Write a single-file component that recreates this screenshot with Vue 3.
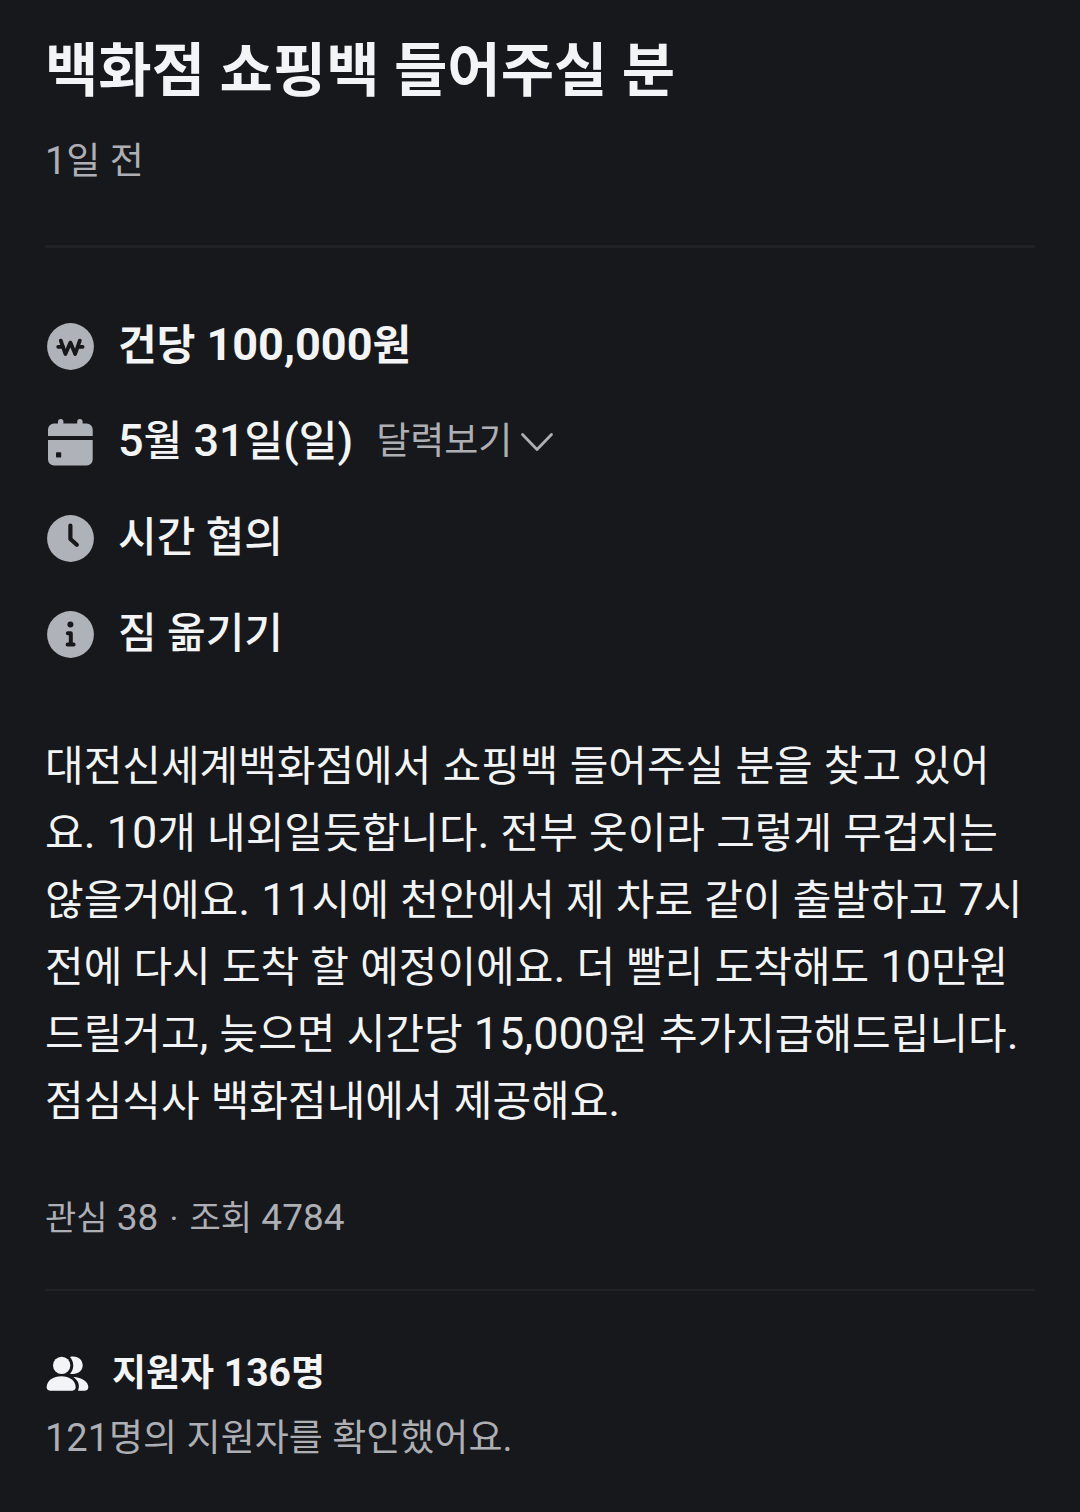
<script setup>
import { h, ref } from 'vue'

const title = '백화점 쇼핑백 들어주실 분'
const postedAt = '1일 전'
const description =
  '대전신세계백화점에서 쇼핑백 들어주실 분을 찾고 있어요. 10개 내외일듯합니다. 전부 옷이라 그렇게 무겁지는 않을거에요. 11시에 천안에서 제 차로 같이 출발하고 7시 전에 다시 도착 할 예정이에요. 더 빨리 도착해도 10만원 드릴거고, 늦으면 시간당 15,000원 추가지급해드립니다. 점심식사 백화점내에서 제공해요.'
const applicants = '지원자 136명'
const checked = '121명의 지원자를 확인했어요.'

const calendarOpen = ref(false)

// Latin runs are set slightly larger than the Hangul around them.
const MixedText = (props) =>
  props.text
    .split(/([ -~]+)/)
    .filter(Boolean)
    .map((run) => (/^[ -~]/.test(run) ? h('span', { class: 'latin' }, run) : run))
MixedText.props = ['text']
</script>

<template>
  <main class="post">
    <header class="head">
      <h1 class="title">{{ title }}</h1>
      <p class="muted"><MixedText :text="postedAt" /></p>
    </header>

    <hr class="rule" />

    <ul class="facts">
      <li class="fact strong">
        <svg class="icon" viewBox="0 0 51 51" aria-hidden="true">
          <circle cx="25.5" cy="25.5" r="23.4" fill="#afb2b9" />
          <g fill="none" stroke="#17181b" stroke-linecap="round" stroke-linejoin="round">
            <path d="M15.8 19.6 20.4 33 25.4 21.6 30.2 33 34.8 19.6" stroke-width="3.8" />
            <path d="M13.2 25.8H18M32.8 25.8H37.6" stroke-width="3.8" />
          </g>
        </svg>
        <span><MixedText text="건당 100,000원" /></span>
      </li>
      <li class="fact">
        <svg class="icon" viewBox="0 0 51 51" aria-hidden="true">
          <g fill="#afb2b9">
            <rect x="13" y="2" width="5.4" height="9" rx="2.7" />
            <rect x="32.2" y="2" width="5.4" height="9" rx="2.7" />
            <path d="M3 19V12.5a6 6 0 0 1 6-6H41.7a6 6 0 0 1 6 6V19Z" />
            <path d="M3 23H47.7V42.5a6 6 0 0 1-6 6H9a6 6 0 0 1-6-6Z" />
          </g>
          <rect x="11" y="35.3" width="5.2" height="5.2" rx="0.8" fill="#17181b" />
        </svg>
        <span><MixedText text="5월 31일(일)" /></span>
        <button class="toggle" type="button" :aria-expanded="calendarOpen" @click="calendarOpen = !calendarOpen">
          달력보기
          <svg class="chevron" viewBox="0 0 34 22" aria-hidden="true">
            <path d="M2.5 3.5 17 18.5 31.5 3.5" fill="none" stroke="#adafb4" stroke-width="2.8" stroke-linecap="round" stroke-linejoin="round" />
          </svg>
        </button>
      </li>
      <li class="fact">
        <svg class="icon" viewBox="0 0 51 51" aria-hidden="true">
          <circle cx="25.5" cy="25.5" r="23.4" fill="#afb2b9" />
          <path d="M25.4 12.5V26L31.8 31.8" fill="none" stroke="#17181b" stroke-width="4.2" stroke-linecap="round" stroke-linejoin="round" />
        </svg>
        <span>시간 협의</span>
      </li>
      <li class="fact">
        <svg class="icon" viewBox="0 0 51 51" aria-hidden="true">
          <circle cx="25.5" cy="25.5" r="23.4" fill="#afb2b9" />
          <circle cx="25.4" cy="15.5" r="3" fill="#17181b" />
          <path d="M22.8 24.3H25.8V35.5M22.6 35.5H28.6" fill="none" stroke="#17181b" stroke-width="4" stroke-linecap="round" stroke-linejoin="round" />
        </svg>
        <span>짐 옮기기</span>
      </li>
    </ul>

    <p class="description"><MixedText :text="description" /></p>
    <p class="stats"><MixedText text="관심 38 " /><span class="dot">·</span><MixedText text=" 조회 4784" /></p>

    <hr class="rule thin" />

    <section class="applicants">
      <h2 class="count">
        <svg class="people" viewBox="45 78 132 108" aria-hidden="true">
          <g fill="#f3f4f6">
            <circle cx="95" cy="106" r="26" />
            <path d="M50 172C50 152 70 139 94 139S137 152 137 172C137 178 133 182 127 182H60C54 182 50 178 50 172Z" />
            <path d="M120 81C142 76 158 88 158 106S142 135 120 131C133 118 133 95 120 81Z" />
            <path d="M130 141C156 142 175 155 175 172C175 178 171 182 165 182H144C150 166 146 152 130 141Z" />
          </g>
        </svg>
        <span><MixedText :text="applicants" /></span>
      </h2>
      <p class="muted"><MixedText :text="checked" /></p>
    </section>
  </main>
</template>

<style>
body {
  margin: 0;
  background: #17181b;
}
</style>

<style scoped>
.post {
  padding: 29px 45px 44px;
  color: #f3f4f6;
  font-family: Roboto, "Noto Sans CJK KR", sans-serif;
}

h1,
h2,
p,
ul {
  margin: 0;
  padding: 0;
}

.post :deep(.latin) {
  line-height: 1;
}

.title {
  font-size: 58px;
  font-weight: 700;
  line-height: 84px;
}

.muted {
  color: #adafb4;
  font-size: 37px;
  line-height: 56px;
}

.muted :deep(.latin) {
  font-size: 38px;
}

.head .muted {
  margin-top: 21px;
}

.rule {
  height: 3px;
  margin: 55px 0 66px;
  border: 0;
  background: #212226;
}

.facts {
  display: flex;
  flex-direction: column;
  gap: 32px;
  list-style: none;
}

.fact {
  display: flex;
  align-items: center;
  font-size: 42px;
  font-weight: 500;
  line-height: 64px;
}

.fact.strong {
  font-weight: 700;
}

.fact :deep(.latin),
.description :deep(.latin) {
  font-size: 45px;
}

.icon {
  width: 51px;
  height: 51px;
  margin-right: 22px;
}

.toggle {
  display: flex;
  align-items: center;
  gap: 8px;
  margin-left: 23px;
  padding: 0;
  border: 0;
  background: none;
  color: #adafb4;
  font: inherit;
  font-size: 37px;
  font-weight: 400;
  line-height: 56px;
  cursor: pointer;
}

.chevron {
  width: 34px;
  height: 22px;
}

.description {
  margin-top: 67px;
  font-size: 42px;
  line-height: 67px;
}

.stats {
  margin-top: 55px;
  color: #adafb4;
  font-size: 34px;
  line-height: 56px;
}

.stats :deep(.latin) {
  font-size: 37px;
}

.dot {
  margin: 0 2px;
}

.rule.thin {
  height: 2px;
  margin: 43px 0 51px;
}

.count {
  display: flex;
  align-items: center;
  gap: 23px;
  font-size: 37px;
  font-weight: 700;
  line-height: 64px;
}

.count :deep(.latin) {
  font-size: 39px;
}

.people {
  width: 44px;
  height: 36px;
}

.applicants .muted {
  margin-top: 5px;
}
</style>
